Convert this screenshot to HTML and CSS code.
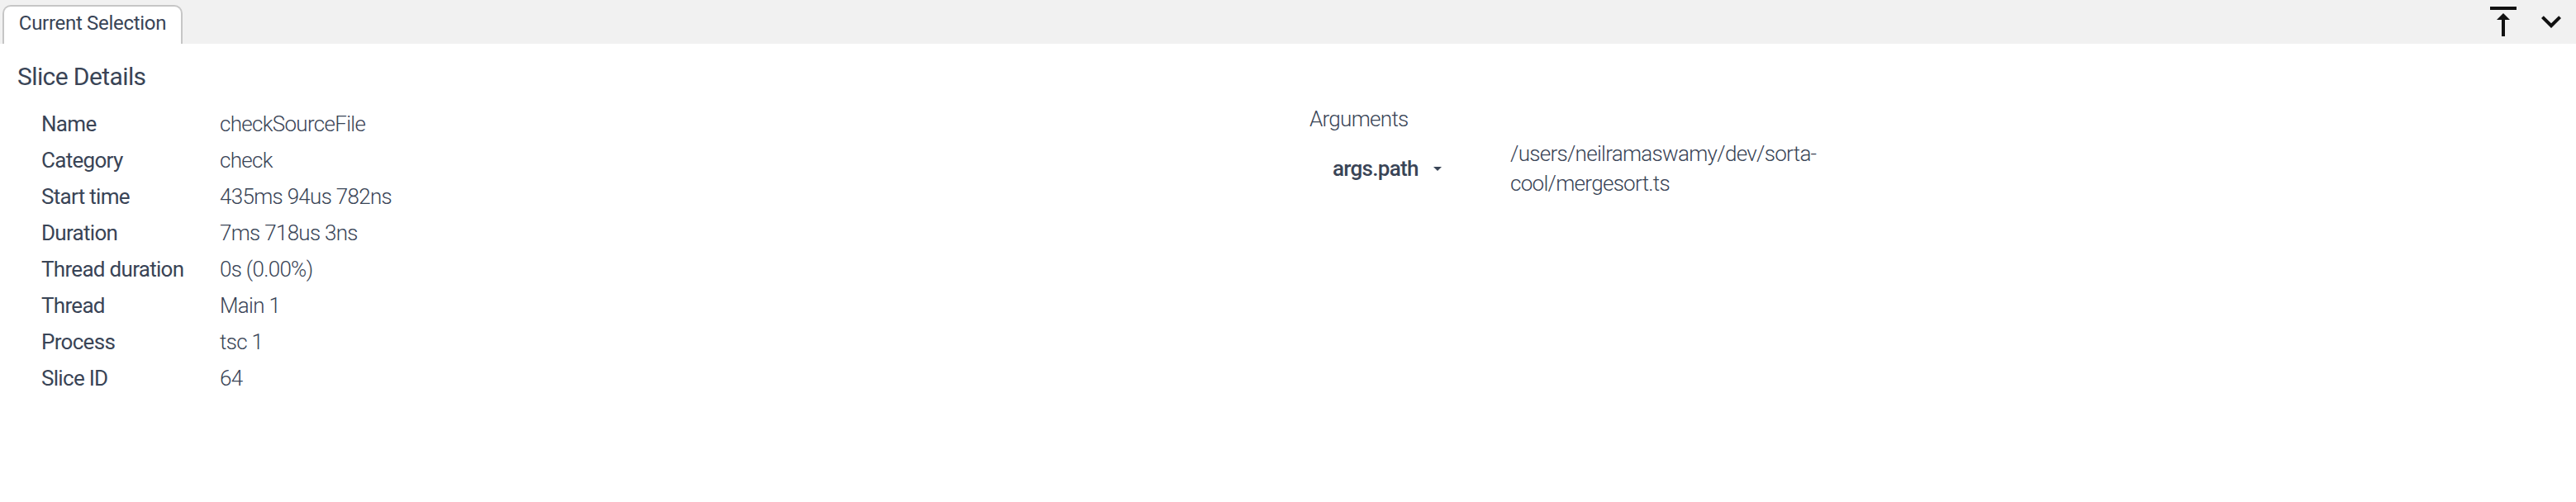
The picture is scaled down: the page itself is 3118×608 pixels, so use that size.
FILE: index.html
```html
<!DOCTYPE html>
<html>
<head>
<meta charset="utf-8">
<link rel="stylesheet" href="styles.css">
</head>
<body>
<div class="tabbar">
  <div class="tab">Current Selection</div>
  <div class="spacer"></div>
  <div class="tools">
    <svg class="icon" viewBox="0 0 24 24"><path d="M8 11h3v10h2V11h3l-4-4-4 4zM4 3v2h16V3H4z"/></svg>
    <svg class="icon" viewBox="0 0 24 24"><path d="M16.59 8.59L12 13.17 7.41 8.59 6 10l6 6 6-6z"/></svg>
  </div>
</div>
<div class="panel">
  <section class="col">
    <h2 class="heading">Slice Details</h2>
    <div class="details">
      <div class="label">Name</div><div class="value">checkSourceFile</div>
      <div class="label">Category</div><div class="value">check</div>
      <div class="label">Start time</div><div class="value">435ms 94us 782ns</div>
      <div class="label">Duration</div><div class="value">7ms 718us 3ns</div>
      <div class="label">Thread duration</div><div class="value">0s (0.00%)</div>
      <div class="label">Thread</div><div class="value">Main 1</div>
      <div class="label">Process</div><div class="value">tsc 1</div>
      <div class="label">Slice ID</div><div class="value">64</div>
    </div>
  </section>
  <section class="col right">
    <h3 class="subheading">Arguments</h3>
    <div class="args">
      <div class="argkey">args.path <span class="caret"></span></div>
      <div class="argval">/users/neilramaswamy/dev/sorta-cool/mergesort.ts</div>
    </div>
  </section>
</div>
</body>
</html>
```

FILE: styles.css
```css
html, body {
  margin: 0;
  padding: 0;
  background: #ffffff;
}
body {
  font-family: Roboto, "Liberation Sans", sans-serif;
  color: #394456;
  width: 3118px;
  height: 608px;
  overflow: hidden;
}
.tabbar {
  display: flex;
  align-items: flex-end;
  height: 53px;
  background: #f1f1f1;
}
.tab {
  box-sizing: border-box;
  height: 47px;
  margin-left: 3px;
  width: 218px;
  border: 2px solid #c6c6c6;
  border-bottom: none;
  border-radius: 10px 10px 0 0;
  background: #ffffff;
  font-size: 24px;
  line-height: 40px;
  letter-spacing: -0.3px;
  text-align: center;
  color: #394456;
}
.spacer { flex: 1; }
.tools {
  align-self: flex-start;
  display: flex;
  gap: 10px;
  padding-top: 2px;
  margin-right: 6px;
}
.icon {
  width: 48px;
  height: 48px;
  fill: #111111;
}
.panel {
  display: grid;
  grid-template-columns: 1fr 1fr;
}
.col {
  padding-left: 21px;
}
.heading {
  margin: 22px 0 17px;
  font-size: 30px;
  line-height: 36px;
  font-weight: 400;
  letter-spacing: -0.6px;
}
.details {
  display: grid;
  grid-template-columns: 216px auto;
  justify-content: start;
  padding-left: 29px;
  font-size: 26px;
  line-height: 36px;
  letter-spacing: -0.7px;
}
.label, .value {
  padding: 4px 0;
}
.value {
  font-weight: 300;
}
.right {
  padding-left: 26px;
}
.subheading {
  margin: 73px 0 2px;
  font-size: 26px;
  line-height: 36px;
  font-weight: 300;
  letter-spacing: -0.7px;
}
.args {
  display: grid;
  grid-template-columns: 215px 420px;
  padding-left: 28px;
  font-size: 26px;
  line-height: 36px;
  letter-spacing: -0.7px;
}
.argkey {
  padding: 4px 0;
  font-weight: 500;
  display: flex;
  align-items: center;
}
.caret {
  display: inline-block;
  width: 0;
  height: 0;
  margin-left: 18px;
  border-left: 5px solid transparent;
  border-right: 5px solid transparent;
  border-top: 5px solid #394456;
}
.argval {
  padding: 4px 0;
  font-weight: 300;
}
```
